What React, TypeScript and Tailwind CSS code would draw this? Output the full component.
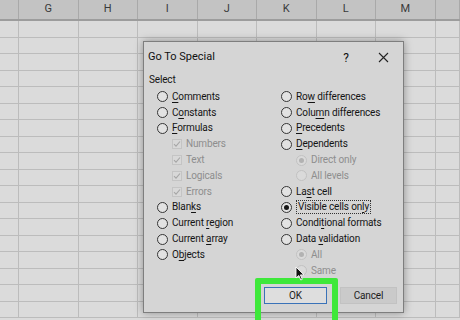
import React from "react";

const font = { fontFamily: 'Roboto, "Noto Sans", sans-serif' };

function Label({ text, u }: { text: string; u: number }) {
	return (
		<span>
			{text.slice(0, u)}
			<span className="underline underline-offset-2">{text[u]}</span>
			{text.slice(u + 1)}
		</span>
	);
}

function Radio({ checked, disabled }: { checked?: boolean; disabled?: boolean }) {
	return (
		<span
			className={`flex h-[11px] w-[11px] shrink-0 items-center justify-center rounded-full border ${
				disabled ? "border-[#c2c2c2] bg-[#dadada]" : "border-[#353535] bg-[#e2e2e2]"
			}`}
		>
			{checked && (
				<span className={`h-[5px] w-[5px] rounded-full ${disabled ? "bg-[#b2b2b2]" : "bg-[#151515]"}`} />
			)}
		</span>
	);
}

function Check() {
	return (
		<span className="flex h-[10px] w-[10px] shrink-0 items-center justify-center border border-[#c4c4c4] bg-[#d8d8d8]">
			<svg width="8" height="8" viewBox="0 0 8 8">
				<path d="M1 4.2 L3 6.2 L7 1.5" fill="none" stroke="#a6a6a6" strokeWidth="1.1" />
			</svg>
		</span>
	);
}

type Item = {
	t: string;
	u: number;
	kind: "radio" | "subradio" | "check";
	checked?: boolean;
	focus?: boolean;
};

const left: Item[] = [
	{ t: "Comments", u: 0, kind: "radio" },
	{ t: "Constants", u: 1, kind: "radio" },
	{ t: "Formulas", u: 0, kind: "radio" },
	{ t: "Numbers", u: -1, kind: "check" },
	{ t: "Text", u: -1, kind: "check" },
	{ t: "Logicals", u: -1, kind: "check" },
	{ t: "Errors", u: -1, kind: "check" },
	{ t: "Blanks", u: 4, kind: "radio" },
	{ t: "Current region", u: 8, kind: "radio" },
	{ t: "Current array", u: 8, kind: "radio" },
	{ t: "Objects", u: 1, kind: "radio" },
];

const right: Item[] = [
	{ t: "Row differences", u: 2, kind: "radio" },
	{ t: "Column differences", u: 4, kind: "radio" },
	{ t: "Precedents", u: 0, kind: "radio" },
	{ t: "Dependents", u: 0, kind: "radio" },
	{ t: "Direct only", u: -1, kind: "subradio", checked: true },
	{ t: "All levels", u: -1, kind: "subradio" },
	{ t: "Last cell", u: 2, kind: "radio" },
	{ t: "Visible cells only", u: 16, kind: "radio", checked: true, focus: true },
	{ t: "Conditional formats", u: 5, kind: "radio" },
	{ t: "Data validation", u: 5, kind: "radio" },
	{ t: "All", u: -1, kind: "subradio", checked: true },
	{ t: "Same", u: -1, kind: "subradio" },
];

function Row({ item }: { item: Item }) {
	const sub = item.kind !== "radio";
	return (
		<div className={`flex h-[15.8px] items-center gap-[4px] ${sub ? "pl-[15px]" : ""}`}>
			{item.kind === "check" ? (
				<Check />
			) : (
				<Radio checked={item.checked} disabled={item.kind === "subradio"} />
			)}
			<span
				className={`leading-none ${sub ? "text-[#8e8e8e]" : "text-[#141414]"} ${
					item.focus ? "border border-dotted border-[#333] px-[1px] py-[1px]" : ""
				}`}
			>
				{item.u < 0 ? item.t : <Label text={item.t} u={item.u} />}
			</span>
		</div>
	);
}

const colW = [19, 59.5, 59.5, 59.5, 59.5, 59.5, 59.5, 59.5, 24.5];
const letters = ["", "G", "H", "I", "J", "K", "L", "M", ""];

export default function App() {
	return (
		<div className="relative h-[320px] w-[460px] overflow-hidden bg-[#dbdbdb]" style={font}>
			{/* sheet */}
			<div className="flex h-[21px] border-b-2 border-[#9c9c9c] bg-[#c3c3c3]">
				{letters.map((l, i) => (
					<div
						key={i}
						className="flex shrink-0 items-center justify-center border-r border-[#a9a9a9] text-[11px] text-[#3a3a3a]"
						style={{ width: colW[i] }}
					>
						{l}
					</div>
				))}
			</div>
			{Array.from({ length: 18 }).map((_, r) => (
				<div key={r} className="flex h-[16.5px] border-b border-[#bcbcbc]">
					{colW.map((w, i) => (
						<div key={i} className="shrink-0 border-r border-[#bcbcbc]" style={{ width: w }} />
					))}
				</div>
			))}

			{/* dialog */}
			<div className="absolute left-[143px] top-[41px] flex h-[272px] w-[261px] flex-col border border-[#7e7e7e] bg-[#d5d5d5] text-[10px] tracking-[-0.15px] shadow-[0_0_8px_rgba(0,0,0,0.35)]">
				<div className="flex h-[31px] items-center pl-[4px] pr-[14px] text-[11px] tracking-normal text-[#111]">
					<span className="flex-1">Go To Special</span>
					<span className="mr-[29px] text-[12px]">?</span>
					<svg width="11" height="11" viewBox="0 0 11 11">
						<path d="M1 1 L10 10 M10 1 L1 10" stroke="#222" strokeWidth="1.1" />
					</svg>
				</div>
				<div className="pl-[5px] leading-[14px] text-[#141414]">Select</div>
				<div className="mt-[2px] flex">
					<div className="w-[137px] pl-[13px]">
						{left.map((it) => (
							<Row key={it.t} item={it} />
						))}
					</div>
					<div>
						{right.map((it) => (
							<Row key={it.t} item={it} />
						))}
					</div>
				</div>
				<div className="mt-auto flex justify-end gap-[13px] pb-[8px] pr-[6px]">
					<div className="flex h-[17px] w-[63px] items-center justify-center border border-[#3a72b8] bg-[#dedede] text-[#1c1c1c]">
						OK
					</div>
					<div className="flex h-[17px] w-[57px] items-center justify-center border border-[#c2c2c2] bg-[#cacaca] text-[#1c1c1c]">
						Cancel
					</div>
				</div>
			</div>

			{/* highlight */}
			<div className="absolute left-[255px] top-[278px] h-[50px] w-[83px] rounded-[2px] border-[6px] border-[#3ee83a]" />

			{/* cursor */}
			<svg className="absolute left-[295px] top-[266px]" width="10" height="15" viewBox="0 0 10 15">
				<path d="M1 1 L1 12 L3.8 9.5 L5.8 14 L7.3 13.3 L5.4 8.9 L9 8.9 Z" fill="#111" stroke="#fff" strokeWidth="0.9" />
			</svg>
		</div>
	);
}
